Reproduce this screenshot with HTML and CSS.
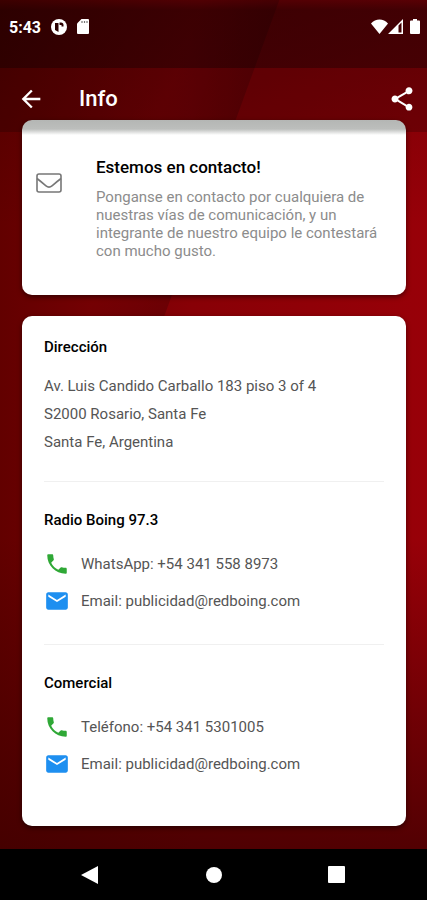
FILE: index.html
```html
<!DOCTYPE html>
<html lang="es">
  <head>
    <meta charset="utf-8" />
    <meta name="viewport" content="width=device-width, initial-scale=1" />
    <title>Info</title>
    <link rel="stylesheet" href="styles.css">
  </head>
  <body>
    <!-- shapes used more than once -->
    <svg width="0" height="0" class="defs">
      <symbol id="phone" viewBox="0 0 24 24">
        <path d="M6.620 10.790c1.440 2.830 3.760 5.140 6.590 6.590l2.200-2.200c.27-.27.67-.36 1.020-.24 1.120.37 2.330.57 3.570.57.55 0 1 .45 1 1V20c0 .55-.45 1-1 1-9.390 0-17-7.610-17-17 0-.55.45-1 1-1h3.500c.55 0 1 .45 1 1 0 1.250.2 2.450.57 3.570.11.35.03.74-.25 1.020l-2.200 2.200z" />
      </symbol>
      <symbol id="mail" viewBox="0 0 24 24">
        <path d="M20 4H4c-1.100 0-1.990.9-1.990 2L2 18c0 1.100.9 2 2 2h16c1.100 0 2-.9 2-2V6c0-1.100-.9-2-2-2zm0 4l-8 5-8-5V6l8 5 8-5v2z" />
      </symbol>
    </svg>

    <div class="status">
      <span class="time">5:43</span>
      <svg width="16" height="16" viewBox="0 0 16 16">
        <circle cx="8" cy="8" r="8" fill="#fff" />
        <path d="M4 4h3.500v9L4 11z" fill="#2b0000" />
        <path d="M8.500 3.500h1.500a2.500 2.500 0 0 1 2.500 2.500v1.500h-2V6h-2z" fill="#2b0000" />
      </svg>
      <svg class="sd" width="12" height="15" viewBox="0 0 12 15">
        <path d="M4.500 0H11a1 1 0 0 1 1 1v13a1 1 0 0 1-1 1H1a1 1 0 0 1-1-1V4.500z" fill="#fff" />
        <path d="M5 2v2M7.500 2v2M10 2v2" stroke="#777" stroke-width="1.200" />
      </svg>
      <div class="signals">
        <svg width="17" height="15" viewBox="0 0 17 15">
          <path d="M0 4.500C4.500-.8 12.500-.8 17 4.500L8.500 15z" fill="#fff" />
        </svg>
        <svg width="15" height="15" viewBox="0 0 15 15">
          <path d="M0 15L15 0v15zM10.500 6.500V13.500h3V3.600z" fill="#fff" fill-rule="evenodd" />
        </svg>
        <svg class="battery" width="10" height="15" viewBox="0 0 10 15">
          <path d="M3 0h4v1.500h2a1 1 0 0 1 1 1V14a1 1 0 0 1-1 1H1a1 1 0 0 1-1-1V2.500a1 1 0 0 1 1-1h2z" fill="#fff" />
        </svg>
      </div>
    </div>

    <header class="appbar">
      <button type="button" aria-label="Volver">
        <svg width="28" height="28" viewBox="0 0 24 24" fill="#fff">
          <path d="M20 11H7.830l5.590-5.590L12 4l-8 8 8 8 1.410-1.410L7.830 13H20v-2z" />
        </svg>
      </button>
      <h1>Info</h1>
      <button type="button" aria-label="Compartir">
        <svg width="28" height="28" viewBox="0 0 24 24" fill="#fff">
          <path d="M18 16.080c-.76 0-1.440.3-1.960.77L8.910 12.700c.05-.23.09-.46.09-.7s-.04-.47-.09-.7l7.050-4.110c.54.5 1.250.81 2.040.81 1.660 0 3-1.340 3-3s-1.340-3-3-3-3 1.340-3 3c0 .24.04.47.09.7L8.040 9.810C7.500 9.310 6.790 9 6 9c-1.660 0-3 1.340-3 3s1.340 3 3 3c.79 0 1.500-.31 2.040-.81l7.120 4.160c-.05.21-.08.43-.08.65 0 1.610 1.310 2.920 2.920 2.920s2.920-1.310 2.920-2.920-1.310-2.920-2.920-2.920z" />
        </svg>
      </button>
    </header>

    <main>
      <section class="card contact">
        <svg width="26" height="20" viewBox="0 0 26 20" fill="none" stroke="#777" stroke-width="1.600">
          <rect x="1" y="1" width="24" height="18" rx="2" />
          <path d="M1 5.500C4.500 8.200 7 10.300 10 12.800c2 1.700 4 1.700 6 0 3-2.500 5.500-4.600 9-7.300" />
        </svg>
        <div>
          <h2>Estemos en contacto!</h2>
          <p>Ponganse en contacto por cualquiera de nuestras vías de comunicación, y un integrante de nuestro equipo le contestará con mucho gusto.</p>
        </div>
      </section>

      <div class="card details">
        <section>
          <h3>Dirección</h3>
          <address>
            Av. Luis Candido Carballo 183 piso 3 of 4<br />
            S2000 Rosario, Santa Fe<br />
            Santa Fe, Argentina
          </address>
        </section>
        <section>
          <h3>Radio Boing 97.3</h3>
          <a href="tel:+543415588973"><svg class="phone"><use href="#phone" /></svg>WhatsApp: +54 341 558 8973</a>
          <a href="mailto:publicidad@redboing.com"><svg class="mail"><use href="#mail" /></svg>Email: publicidad@redboing.com</a>
        </section>
        <section>
          <h3>Comercial</h3>
          <a href="tel:+543415301005"><svg class="phone"><use href="#phone" /></svg>Teléfono: +54 341 5301005</a>
          <a href="mailto:publicidad@redboing.com"><svg class="mail"><use href="#mail" /></svg>Email: publicidad@redboing.com</a>
        </section>
      </div>
    </main>

    <nav class="navbar">
      <button type="button" aria-label="Atrás">
        <svg width="18" height="18" viewBox="0 0 18 18" fill="#fff"><path d="M0 9L17 0v18z" /></svg>
      </button>
      <button type="button" aria-label="Inicio">
        <svg width="18" height="18" viewBox="0 0 18 18" fill="#fff"><circle cx="9" cy="9" r="8" /></svg>
      </button>
      <button type="button" aria-label="Recientes">
        <svg width="18" height="18" viewBox="0 0 18 18" fill="#fff"><rect width="17" height="17" rx="1" /></svg>
      </button>
    </nav>
  </body>
</html>
```
FILE: styles.css
```css
* {
  box-sizing: border-box;
}

body {
  margin: 0;
  min-height: 100vh;
  display: flex;
  flex-direction: column;
  font-family: Roboto, "Liberation Sans", sans-serif;
  /* top and bottom fade, then the diagonal fold, then the red */
  background:
    linear-gradient(180deg, rgba(40, 0, 0, 0.3) 0%, rgba(60, 0, 0, 0) 25%, rgba(60, 0, 0, 0) 60%, rgba(60, 0, 0, 0.75) 94%),
    linear-gradient(110deg, rgba(0, 0, 0, 0) 190px, rgba(0, 0, 0, 0.18) 262px, rgba(0, 0, 0, 0) 263px) 0 0 / 100% 500px no-repeat,
    linear-gradient(90deg, #620000, #880006 45%, #980008);
}

h1,
h2,
h3,
p {
  margin: 0;
  font-weight: 500;
}

svg {
  display: block;
  flex: none;
}

.defs {
  position: absolute;
}

button {
  border: 0;
  padding: 0;
  background: none;
  cursor: pointer;
}

.status {
  height: 68px;
  padding: 19px 7px 0 9px;
  display: flex;
  align-items: flex-start;
  color: #fff;
  background: linear-gradient(rgba(0, 0, 0, 0.25) 0px, rgba(0, 0, 0, 0.45) 10px);
}

.time {
  font-size: 16px;
  line-height: 18px;
  font-weight: 700;
  margin-right: 10px;
}

.sd {
  margin-left: 10px;
}

.signals {
  display: flex;
  margin-left: auto;
}

.battery {
  margin-left: 7px;
}

.appbar {
  height: 64px;
  padding: 0 11px 2px 17px;
  display: flex;
  align-items: center;
  background: rgba(0, 0, 0, 0.2);
}

.appbar h1 {
  flex: 1;
  margin-left: 34px;
  color: #fff;
  font-size: 22px;
  line-height: 28px;
}

main {
  flex: 1;
  margin-top: -12px;
  padding: 0 21px 23px 22px;
  display: flex;
  flex-direction: column;
  gap: 21px;
}

.card {
  background: #fff;
  border-radius: 10px;
  box-shadow: 0 2px 5px rgba(0, 0, 0, 0.5);
}

.contact {
  display: flex;
  padding: 36px 22px 35px 14px;
  /* shadow that the app bar throws on the card */
  background: linear-gradient(#b4b6b4 0px, #bcbebc 9px, #fff 15px);
}

.contact svg {
  margin: 17px 34px 0 0;
}

.contact h2 {
  font-size: 17px;
  line-height: 22px;
  margin-bottom: 10px;
}

.contact p {
  color: #8c8c8c;
  font-size: 15px;
  line-height: 18px;
  font-weight: 400;
}

.details {
  padding: 21px 22px 19px;
}

.details section {
  padding: 28px 0 25px;
}

.details section:first-child {
  padding-top: 0;
}

.details section + section {
  border-top: 1px solid #f0f0f0;
}

.details h3 {
  font-size: 15px;
  line-height: 20px;
  margin-bottom: 15px;
}

.details address,
.details a {
  color: #555;
  font-size: 15px;
  font-style: normal;
}

.details address {
  line-height: 28px;
}

.details a {
  height: 37px;
  display: flex;
  align-items: center;
  text-decoration: none;
}

.details a svg {
  width: 26px;
  height: 26px;
  margin-right: 11px;
}

.phone {
  fill: #2fa836;
}

.mail {
  fill: #1e8ff0;
}

.navbar {
  height: 51px;
  padding: 0 28px;
  display: flex;
  align-items: center;
  background: #000;
}

.navbar button {
  flex: 1;
  display: flex;
  justify-content: center;
}
```
